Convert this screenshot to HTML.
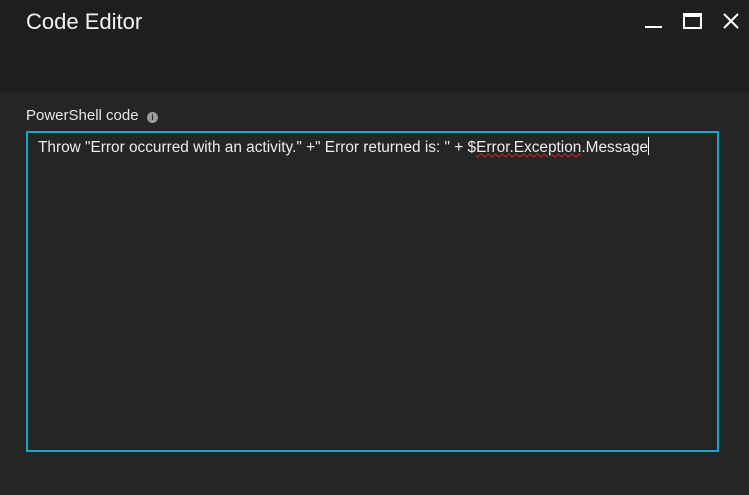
<!DOCTYPE html>
<html><head><meta charset="utf-8"><style>
html,body{margin:0;padding:0;width:749px;height:495px;overflow:hidden;background:#252525;font-family:"Liberation Sans",sans-serif;}
.hdr{position:absolute;left:0;top:0;width:749px;height:92px;background:#1f1f1f;}
.title{position:absolute;left:26px;top:9px;font-size:22px;color:#f2f2f2;}
.lbl{position:absolute;left:26px;top:107px;font-size:15px;color:#e8e8e8;}
.info{position:absolute;left:147px;top:112px;width:11px;height:11px;border-radius:50%;background:#9a9a9a;color:#252525;font-size:8px;line-height:11px;text-align:center;font-weight:bold;}
.box{position:absolute;left:26px;top:131px;width:689px;height:317px;border:2px solid #1aa6c8;}
.code{position:absolute;left:38px;top:137px;font-size:15.4px;color:#ececec;white-space:pre;}
.sq{text-decoration:underline wavy #e02020;text-decoration-thickness:1px;}
.cur{display:inline-block;width:1px;height:18px;background:#fff;vertical-align:-3px;}
</style></head><body>
<div class="hdr"></div>
<div class="title">Code Editor</div>
<svg style="position:absolute;left:0;top:0" width="749" height="92">
<rect x="645" y="26" width="17" height="2" fill="#fff"/>
<rect x="684" y="14" width="17" height="14" fill="none" stroke="#fff" stroke-width="2"/>
<rect x="684" y="14" width="17" height="3" fill="#fff"/>
<path d="M724 14 L738 28 M738 14 L724 28" stroke="#fff" stroke-width="2"/>
</svg>
<div class="lbl">PowerShell code</div>
<div class="info">i</div>
<div class="box"></div>
<div class="code">Throw "Error occurred with an activity." +" Error returned is: " + $<span class="sq">Error.Exception</span>.Message<span class="cur"></span></div>
</body></html>
